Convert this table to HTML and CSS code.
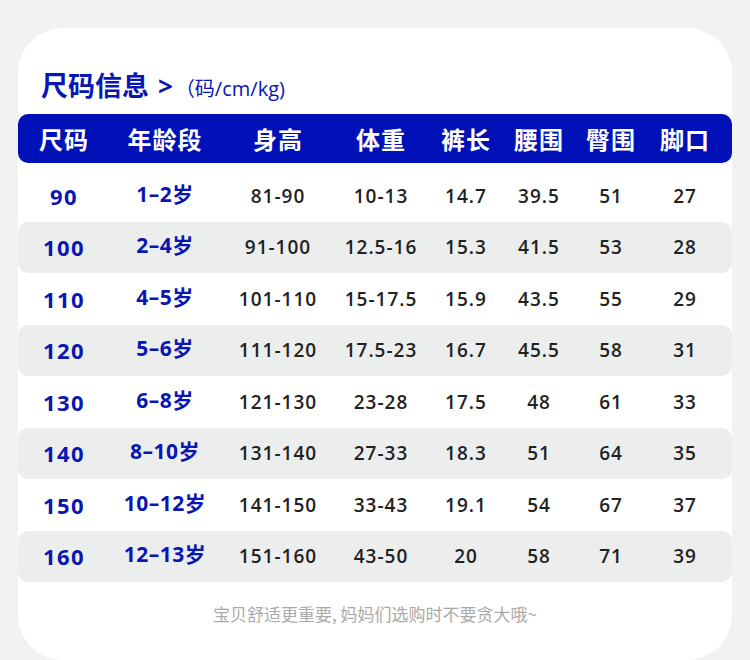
FILE: index.html
```html
<!DOCTYPE html>
<html lang="zh">
<head>
<meta charset="utf-8">
<link rel="stylesheet" href="styles.css">
</head>
<body>
<div class="card">
  <div class="title">
    <span class="title-main">尺码信息</span><span class="title-arrow">&gt;</span><span class="title-unit">（码/cm/kg)</span>
  </div>
  <div class="table">
    <div class="row head">
      <div>尺码</div><div>年龄段</div><div>身高</div><div>体重</div><div>裤长</div><div>腰围</div><div>臀围</div><div>脚口</div>
    </div>
    <div class="body">
      <div class="row"><div class="size">90</div><div class="age">1–2岁</div><div>81-90</div><div>10-13</div><div>14.7</div><div>39.5</div><div>51</div><div>27</div></div>
      <div class="row alt"><div class="size">100</div><div class="age">2–4岁</div><div>91-100</div><div>12.5-16</div><div>15.3</div><div>41.5</div><div>53</div><div>28</div></div>
      <div class="row"><div class="size">110</div><div class="age">4–5岁</div><div>101-110</div><div>15-17.5</div><div>15.9</div><div>43.5</div><div>55</div><div>29</div></div>
      <div class="row alt"><div class="size">120</div><div class="age">5–6岁</div><div>111-120</div><div>17.5-23</div><div>16.7</div><div>45.5</div><div>58</div><div>31</div></div>
      <div class="row"><div class="size">130</div><div class="age">6–8岁</div><div>121-130</div><div>23-28</div><div>17.5</div><div>48</div><div>61</div><div>33</div></div>
      <div class="row alt"><div class="size">140</div><div class="age">8–10岁</div><div>131-140</div><div>27-33</div><div>18.3</div><div>51</div><div>64</div><div>35</div></div>
      <div class="row"><div class="size">150</div><div class="age">10–12岁</div><div>141-150</div><div>33-43</div><div>19.1</div><div>54</div><div>67</div><div>37</div></div>
      <div class="row alt"><div class="size">160</div><div class="age">12–13岁</div><div>151-160</div><div>43-50</div><div>20</div><div>58</div><div>71</div><div>39</div></div>
    </div>
  </div>
  <div class="note">宝贝舒适更重要, 妈妈们选购时不要贪大哦~</div>
</div>
</body>
</html>
```
FILE: styles.css
```css
html, body {
  margin: 0;
  padding: 0;
  background: #f2f2f2;
}
body {
  padding-top: 28px;
  font-family: "Open Sans", "Noto Sans CJK SC", sans-serif;
}
.card {
  margin: 0 18px;
  height: 632px;
  background: #ffffff;
  border-radius: 45px;
  box-sizing: border-box;
  padding-top: 39px;
  overflow: hidden;
}
.title {
  display: flex;
  align-items: baseline;
  padding-left: 23px;
  height: 36px;
  color: #0a16b3;
}
.title-main {
  font-family: "Noto Sans CJK SC", sans-serif;
  font-weight: 700;
  font-size: 27px;
  line-height: 36px;
}
.title-arrow {
  font-family: "Open Sans", sans-serif;
  font-weight: 700;
  font-size: 26px;
  margin-left: 9px;
}
.title-unit {
  font-family: "Open Sans", "Noto Sans CJK SC", sans-serif;
  font-size: 20px;
  margin-left: 2px;
}
.table {
  margin-top: 11px;
}
.row {
  display: grid;
  grid-template-columns: 92px 110px 116px 90px 80px 66px 78px 70px;
  align-items: center;
  height: 51.5px;
  border-radius: 10px;
  font-family: "Open Sans", "Noto Sans CJK SC", sans-serif;
  font-weight: 600;
  font-size: 19px;
  color: #222222;
  letter-spacing: 1px;
}
.row > div {
  text-align: center;
}
.row.head {
  height: 49px;
  background: #0012b7;
  color: #ffffff;
  font-family: "Noto Sans CJK SC", sans-serif;
  font-weight: 700;
  font-size: 24px;
  letter-spacing: 1px;
}
.body {
  margin-top: 7px;
}
.row.alt {
  background: #eceeee;
}
.row .size {
  color: #0a16b3;
  font-weight: 700;
  font-size: 22px;
  letter-spacing: 1.5px;
}
.row .age {
  color: #0a16b3;
  font-weight: 700;
  font-size: 21px;
  letter-spacing: 0.5px;
  margin-top: -6px;
}
.note {
  margin-top: 19px;
  text-align: center;
  font-family: "Noto Sans CJK SC", sans-serif;
  font-size: 17px;
  color: #aaaaaa;
}
```
